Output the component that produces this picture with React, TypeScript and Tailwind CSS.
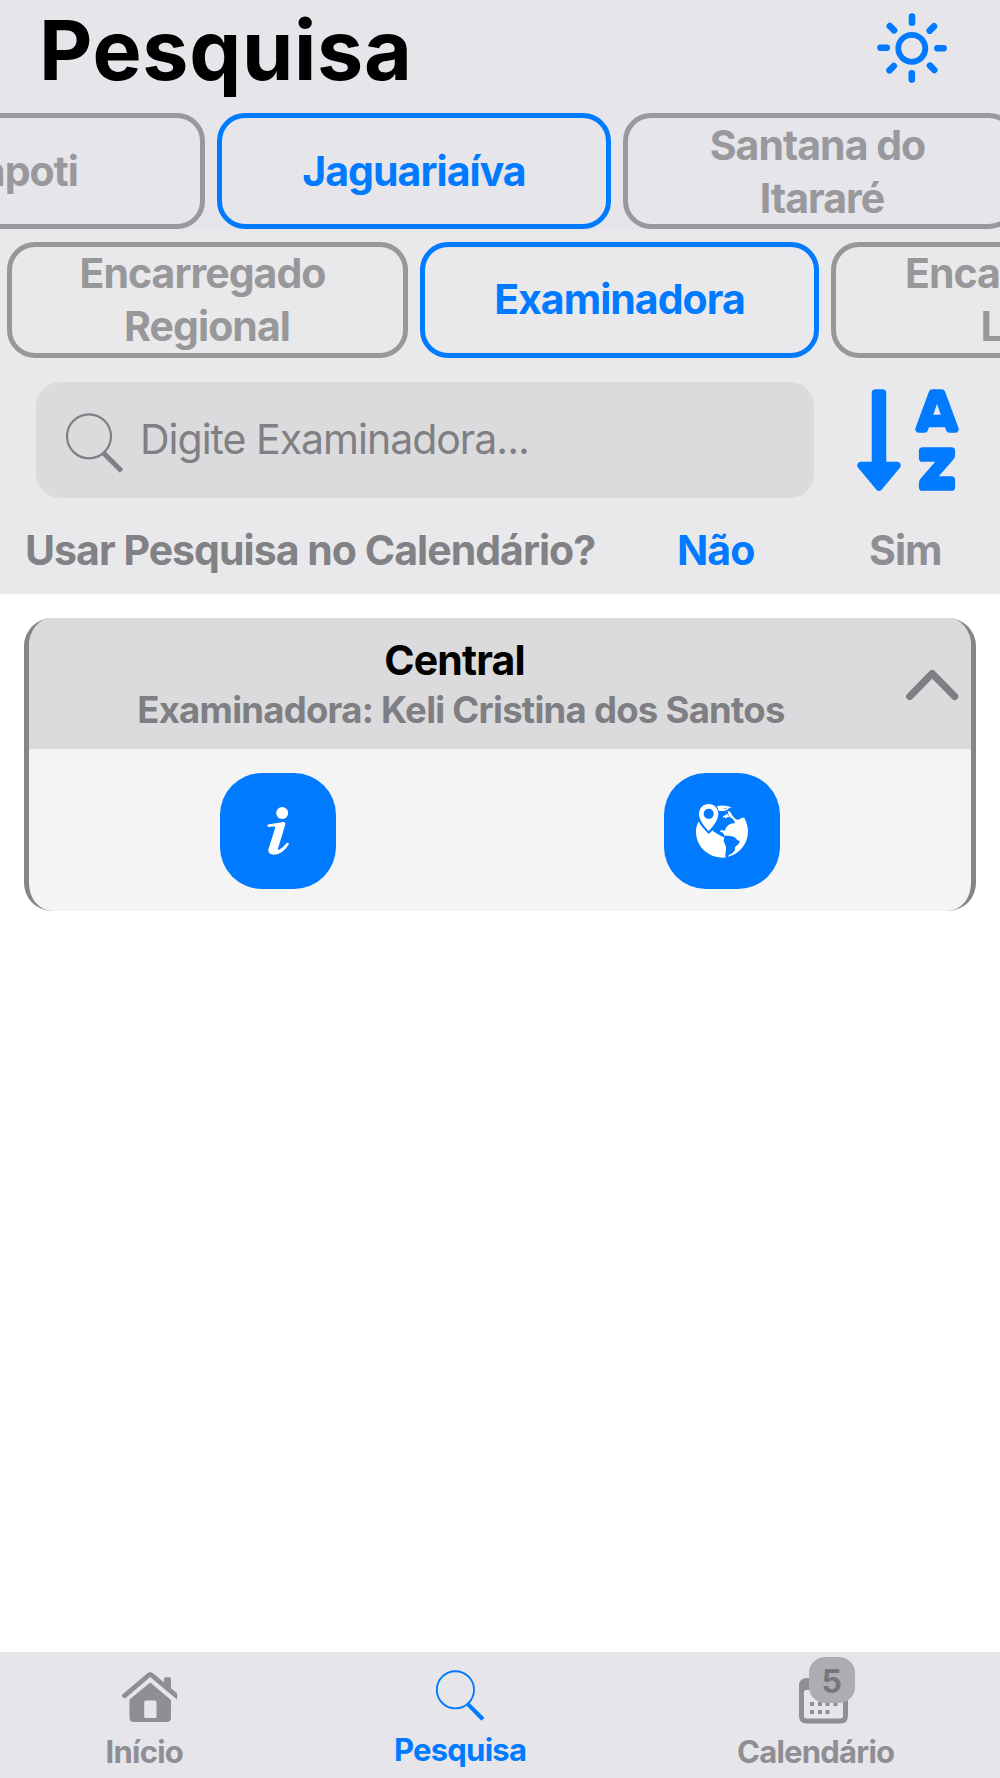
import { FC, ReactNode } from 'react';
import { FaSortAlphaDown } from 'react-icons/fa';

interface PillProps {
    lines: string[];
    width: string;
    active?: boolean;
    idle?: string;
    shift?: string[];
}

const Pill: FC<PillProps> = ({ lines, width, active = false, idle = '', shift = [] }) => (
    <button
        className={`${width} h-[116px] flex-shrink-0 flex flex-col items-center justify-center rounded-[28px] border-[5px] text-[41px] leading-[53px] font-bold tracking-[-0.96px] whitespace-nowrap ${
            active ? 'border-[#007aff] text-[#007aff]' : idle
        }`}
    >
        {lines.map((line, i) => (
            <span key={line} className={shift[i]}>
                {line}
            </span>
        ))}
    </button>
);

const SunIcon: FC = () => (
    <svg className="w-[70px] h-[70px]" viewBox="0 0 70 70" fill="none" stroke="#007aff" strokeLinecap="round">
        <circle cx="34.8" cy="35.3" r="13.5" strokeWidth="5.8" />
        <path
            strokeWidth="6.6"
            d="M35 3.5v6.2M34.8 60.4v6.2M3.5 34.8h6.2M60.4 35.3h6.2M12.8 13l4.3 4.3M53 52.7l4.3 4.3M12.5 57.3l4.3-4.3M52.7 17.6l4.3-4.3"
        />
    </svg>
);

const SearchIcon: FC<{ className: string }> = ({ className }) => (
    <svg className={className} viewBox="0 0 58 60" fill="none" stroke="currentColor">
        <circle cx="23" cy="23.3" r="22" strokeWidth="2.2" />
        <path d="M38 40.5l17.6 17.6" strokeWidth="5" />
    </svg>
);

const InfoIcon: FC = () => (
    <svg className="w-[22px] h-[48px]" viewBox="0 0 22 48" fill="currentColor">
        <circle cx="15.2" cy="6" r="6" />
        <path d="M2 17.2L16.5 15.1Q18.6 15 18.3 17.4L11 41.5Q10.6 43.5 12.5 42.6Q16 40.5 18.8 37Q20 35.2 21.4 36Q22.2 36.7 21.3 38.3Q15 47.6 7.5 47.8Q.2 47.7 1.5 42L8 21.5Q8.5 19.3 6.500 19.4L2 19.9Q.3 20 .3 18.6Q.4 17.5 2 17.2z" />
    </svg>
);

const GlobeIcon: FC = () => (
    <svg className="w-[52px] h-[54px]" viewBox="0 0 52 54" fill="#fff">
        <path
            fillRule="evenodd"
            d="M12.7 0C7.2 0 3 4.2 3 9.8c0 6.6 5.2 12.3 9.7 17.4 4.5-5.1 9.6-10.8 9.6-17.4C22.3 4.2 18.1 0 12.7 0zm0 4.7a5.1 5.1 0 1 1 0 10.2 5.1 5.1 0 0 1 0-10.2z"
        />
        <path d="M2.6 17.5C5 22 9 26 12.700 30l3.800-3.700c1 2 2.400 1.500 3.300 2.600 2 .9 3.700 2.300 5.200 3 1.300.7 3.600.8 3.200 2.200-1.400 3.200.5 5.200 1.600 7.900.8 3.200-.9 6.800-.1 11.500C13.700 55 0 43.500 0 27.500c0-4 1-7.300 2.600-10z" />
        <path d="M41 16c3-.3 3.2-2.3 7.100-2.500C50.500 18 52 22.500 52 27.600c0 12.500-8.600 22.600-20.300 25.200l1.400-2.100c3-.4 4.200-2.700 6-4.400-1-2.600.8-4.400 2.600-5.600 1.300-1.200 2.600-3.200 1.900-3.900-2.600 0-3.400-3.200-6.100-4.100-3.500-1-6-1.400-8.800-.7l-2-3.600-2.500-.3.300-1.900 4.600.2c1-4.500 5.500-7.700 9.200-7z" />
        <path
            fillRule="evenodd"
            d="M21 2c5-1 10.2-.5 15.400 1.700-3.100-.6-4.200 2.300-7.900 3.300-2.500-.4-4.700.4-6-.3zm5 2.800l4.300-.2 1.100-1.200z"
        />
        <path d="M31.500 7c3.800-.2 3.600 3.500 5.900 5.700 1.200 2 3.200 2.900 5 3.600l-2.800 2.800c-1.600-1.600-2.100-4.800-4.700-5.100l-2.300-2.700z" />
        <path d="M31 9.500l-2 2-2 .2v1.700l2-.2.7 1.600 1.700-1.800 2.600.2-2-1.800z" />
    </svg>
);

const HomeIcon: FC = () => (
    <svg className="w-[55px] h-[52px]" viewBox="0 0 55 52">
        <path
            d="M2.5 23.8L26.3 3.5a3 3 0 0 1 3.800 0L58 27"
            fill="none"
            stroke="currentColor"
            strokeWidth="4.8"
            strokeLinecap="round"
        />
        <path fill="currentColor" d="M42 13V6.800q0-1.600 1.600-1.600h3.800q1.600 0 1.600 1.600V20z" />
        <path
            fill="currentColor"
            fillRule="evenodd"
            d="M28.2 10.4L49 28v17.500q0 4.500-4.500 4.500h-32.500Q7.500 50 7.500 45.500V27.500zM23.700 28.500q-1.500 0-1.500 1.500v15q0 1 1 1h10.300q1 0 1-1V30q0-1.500-1.500-1.500z"
        />
    </svg>
);

const CalendarIcon: FC = () => (
    <svg className="w-[49px] h-[46px]" viewBox="0 0 49 46" fill="currentColor">
        <path
            fillRule="evenodd"
            d="M8 0h33q8 0 8 8v29.5q0 8-7.5 8h-34Q0 45.5 0 37.5V8q0-8 8-8zM7 12q-2 0-2 2v24q0 2.500 2.500 2.500h34q2.500 0 2.500-2.500V14q0-2-2-2z"
        />
        <path d="M11 24h4v4h-4zM19 24h4v4h-4zM26.500 24h4v4h-4zM34.500 24h4v4h-4zM11 32h4v4h-4zM19 32h4v4h-4zM26.500 32h4v4h-4z" />
    </svg>
);

const ActionButton: FC<{ label: string; children: ReactNode }> = ({ label, children }) => (
    <button
        aria-label={label}
        className="w-[116px] h-[116px] flex items-center justify-center rounded-[42px] bg-[#007aff] text-white"
    >
        {children}
    </button>
);

export default function App() {
    return (
        <div className="w-[1000px] h-[1778px] overflow-hidden flex flex-col bg-white font-['Inter',sans-serif]">
            <header className="bg-[#e5e5ea] h-[230px]">
                <div className="h-[113px] pl-[39px] pr-[53px] flex items-start justify-between">
                    <h1 className="text-[82.5px] leading-[100px] font-bold tracking-[0.7px] text-black">Pesquisa</h1>
                    <button aria-label="Tema" className="mt-[13px]">
                        <SunIcon />
                    </button>
                </div>
                <div className="flex gap-3 overflow-hidden">
                    <Pill
                        lines={['Arapoti']}
                        width="w-[394px] -ml-[189px]"
                        idle="border-[#98989d] text-[#98989d]"
                        shift={['mr-px mt-px']}
                    />
                    <Pill lines={['Jaguariaíva']} width="w-[394px]" active shift={['mt-px']} />
                    <Pill
                        lines={['Santana do', 'Itararé']}
                        width="w-[394px]"
                        idle="border-[#98989d] text-[#98989d]"
                        shift={['mr-[5px] mt-[2px]', 'ml-[4px]']}
                    />
                </div>
            </header>

            <section className="bg-[#e9e9eb] h-[364px] pt-3">
                <div className="flex gap-3 pl-[7px] overflow-hidden">
                    <Pill
                        lines={['Encarregado', 'Regional']}
                        width="w-[401px]"
                        idle="border-[#98989a] text-[#98989a]"
                        shift={['mr-[10px]', 'mr-[1px]']}
                    />
                    <Pill lines={['Examinadora']} width="w-[399px]" active shift={['mb-px']} />
                    <Pill
                        lines={['Encarregado', 'Local']}
                        width="w-[399px]"
                        idle="border-[#98989a] text-[#98989a]"
                        shift={['mr-[5px]', 'ml-[3px]']}
                    />
                </div>
                <div className="mt-6 flex items-center pl-9">
                    <div className="w-[778px] h-[116px] flex items-center rounded-[24px] bg-[#dbdbdd] pl-[30px] text-[#7f7f84]">
                        <SearchIcon className="w-[58px] h-[60px] mt-[5px]" />
                        <input
                            placeholder="Digite Examinadora..."
                            className="ml-[16px] w-[600px] bg-transparent text-[41px] tracking-[-1px] font-normal outline-none placeholder:text-[#7f7f84]"
                        />
                    </div>
                    <FaSortAlphaDown className="ml-[36px] w-[116px] h-[116px] text-[#007aff]" />
                </div>
                <div className="flex text-[41px] leading-[50px] font-bold tracking-[-0.96px] mt-[27px] pl-[25px]">
                    <span className="w-[652px] text-[#818186]">Usar Pesquisa no Calendário?</span>
                    <span className="w-[192px] text-[#007aff]">Não</span>
                    <span className="text-[#8e8e93]">Sim</span>
                </div>
            </section>

            <main className="flex-1 px-6 pt-6">
                <article className="h-[293px] overflow-hidden rounded-[28px] border-x-[5px] border-[#868689] bg-[#f4f4f4]">
                    <div className="h-[131px] flex items-center justify-between bg-[#dbdbdd] pl-[108px] pr-[12px]">
                        <div className="w-[648px] pt-[2px] text-center font-bold whitespace-nowrap">
                            <h2 className="-ml-[13px] text-[41px] leading-[50px] tracking-[-0.85px] text-black">Central</h2>
                            <p className="text-[36.5px] leading-[50px] tracking-[-0.74px] text-[#7e7e83]">
                                Examinadora: Keli Cristina dos Santos
                            </p>
                        </div>
                        <svg
                            className="mt-[2px] w-[54px] h-[32px]"
                            viewBox="0 0 54 32"
                            fill="none"
                            stroke="#7e7e83"
                            strokeWidth="7.2"
                            strokeLinecap="round"
                            strokeLinejoin="round"
                        >
                            <path d="M4.7 27.5L27.2 4.5l22.500 23" />
                        </svg>
                    </div>
                    <div className="pt-6 flex justify-center gap-[328px]">
                        <ActionButton label="Informações">
                            <InfoIcon />
                        </ActionButton>
                        <ActionButton label="Mapa">
                            <GlobeIcon />
                        </ActionButton>
                    </div>
                </article>
            </main>

            <nav className="h-[126px] bg-[#e5e5ea] flex text-[31px] leading-[38px] font-bold tracking-[-0.75px] text-[#8e8e93]">
                <a className="w-[289px] pt-[20px] flex flex-col items-center">
                    <span className="ml-[10px]">
                        <HomeIcon />
                    </span>
                    <span className="mt-[9px]">Início</span>
                </a>
                <a className="w-[343px] pt-[18px] flex flex-col items-center text-[#007aff]">
                    <SearchIcon className="w-[49px] h-[51px]" />
                    <span className="mt-[10px]">Pesquisa</span>
                </a>
                <a className="w-[369px] pt-[26px] flex flex-col items-center">
                    <span className="relative ml-[15px]">
                        <CalendarIcon />
                        <span className="absolute left-[10px] -top-[21px] w-[46px] h-[46px] rounded-[16px] bg-[#aeaeb2] text-[#77777b] text-[32px] leading-[50px] text-center tracking-normal">
                            5
                        </span>
                    </span>
                    <span className="mt-[9px]">Calendário</span>
                </a>
            </nav>
        </div>
    );
}
